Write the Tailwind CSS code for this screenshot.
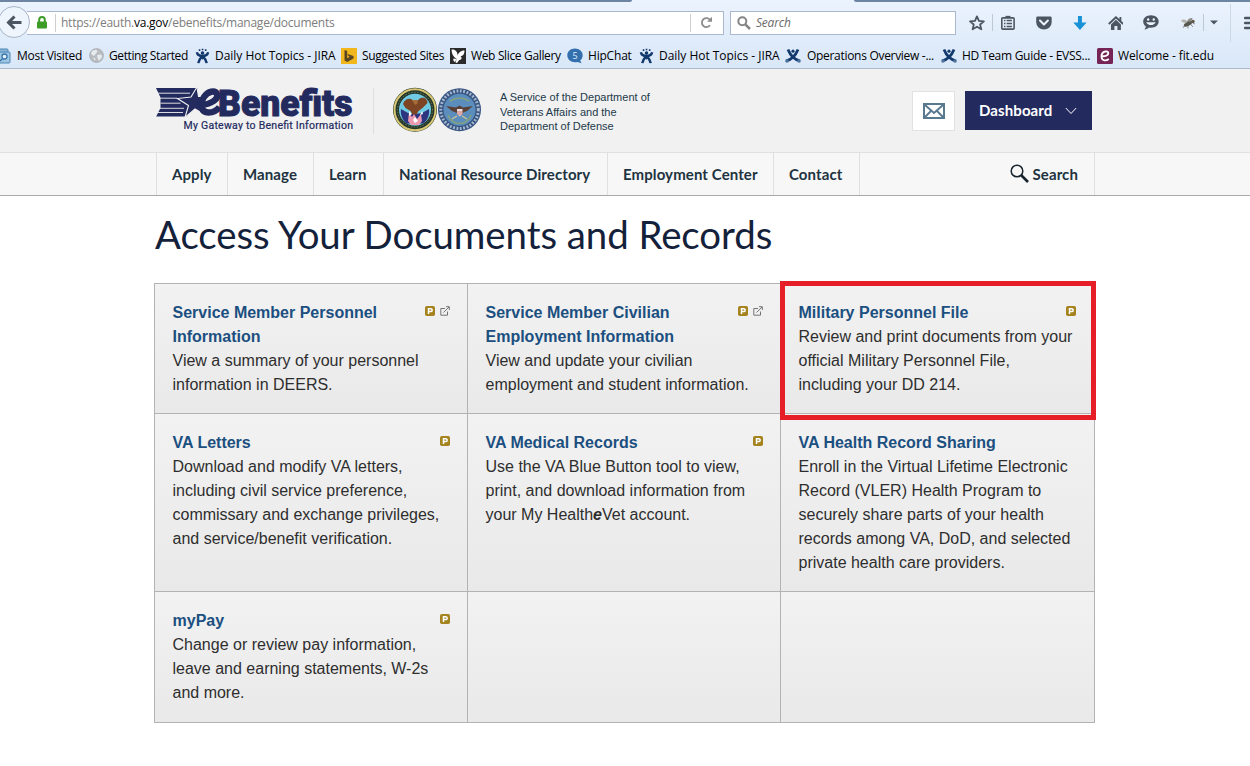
<!DOCTYPE html>
<html lang="en">
<head>
<meta charset="utf-8">
<title>eBenefits - Documents and Records</title>
<script src="https://cdn.jsdelivr.net/npm/@tailwindcss/browser@4"></script>
</head>
<body class="w-[1250px] h-[766px] overflow-hidden bg-white font-['Liberation_Sans',Arial,sans-serif]">
<svg class="hidden">
  <symbol id="jira" viewBox="0 0 16 16"><g fill="none" stroke="#12396b" stroke-width="2.600"><path d="M2 4c.5 2.500 3 4 6 4s5.500-1.500 6-4"/><path d="M3.500 15.500c.5-4 2-5 4.500-7.500c2.500 2.500 4 3.500 4.500 7.500"/></g><circle cx="8" cy="4.700" r="1.900" fill="#12396b"/><path d="M4 1.700h1.700M7.200 1h1.700M10.500 1.700h1.700" stroke="#12396b" stroke-width="1.700"/><path d="M4.500 7.500h7L8 12z" fill="#12396b"/></symbol>
  <symbol id="conf" viewBox="0 0 16 16"><g fill="none" stroke="#14396d" stroke-width="2.800"><path d="M3 1.500c2 5 6 10 12 11.500"/><path d="M13 1.500C11 6.500 7 11.500 1 13"/></g><circle cx="8" cy="3.200" r="1.600" fill="#14396d"/><circle cx="2" cy="13" r="1.800" fill="#4f759e"/><circle cx="14" cy="13" r="1.800" fill="#4f759e"/></symbol>
  <symbol id="prem" viewBox="0 0 10 10"><rect width="10" height="10" rx="1.800" fill="#a5841f"/><path d="M3.500 8V2.700h2.200a1.300 1.300 0 0 1 0 2.900H3.500" fill="none" stroke="#fff" stroke-width="1.500"/></symbol>
  <symbol id="ext" viewBox="0 0 10 10"><g fill="none" stroke="#757575" stroke-width="1"><path d="M5 2.500H.8v6.700h6.700V5.500M3.500 6.500L9 1M6 .7h3.300V4"/></g></symbol>
</svg>

<!-- Browser chrome -->
<div class="h-[69px] border-b border-[#adb9ca] bg-linear-to-b from-[#ebf3fd] to-[#d9e7f8] flex flex-col font-['Open_Sans','Noto_Sans',sans-serif] text-[12px] text-black">
  <div class="flex justify-between h-[2px] shrink-0">
    <div class="w-[632px] bg-[#6d84a3] rounded-br-[4px]"></div>
    <div class="w-[396px] bg-[#6d84a3] rounded-bl-[4px]"></div>
  </div>
  <div class="relative flex items-center h-[41px] shrink-0">
    <div class="absolute left-[-2px] top-[4px] size-[32px] rounded-full border border-[#a7b5c8] bg-[#eff5fc] flex items-center justify-center">
      <svg class="w-[16px] h-[15px]" viewBox="0 0 16 15" fill="none" stroke="#4c5663" stroke-width="3"><path d="M8.500 1.500l-6 6 6 6M3 7.500h12.500"/></svg>
    </div>
    <div class="ml-[27px] w-[697px] h-[24px] border border-[#a9b8cc] border-l-0 bg-white flex items-center">
      <svg class="ml-[9px] w-[12px] h-[13px]" viewBox="0 0 12 13"><rect x="1" y="5.500" width="10" height="7" rx="1" fill="#3d9b27"/><path d="M3.200 6V3.800a2.800 2.800 0 0 1 5.600 0V6" fill="none" stroke="#3d9b27" stroke-width="2"/></svg>
      <div class="ml-[7px] w-px h-[18px] bg-[#cfcfcf]"></div>
      <div class="ml-[5px] w-[629px] whitespace-nowrap text-[#7d7d7d] tracking-[-0.25px]">https://eauth.<span class="text-black">va.gov</span>/ebenefits/manage/documents</div>
      <div class="w-px h-[18px] bg-[#cfcfcf]"></div>
      <svg class="ml-[9px] w-[13px] h-[13px]" viewBox="0 0 13 13"><path d="M10 9.300a4.500 4.500 0 1 1 .3-5" fill="none" stroke="#8c8c8c" stroke-width="1.800"/><path d="M12 .8v5H7z" fill="#8c8c8c"/></svg>
    </div>
    <div class="ml-[6px] w-[226px] h-[24px] border border-[#a9b8cc] bg-white flex items-center">
      <svg class="ml-[6px] w-[14px] h-[14px]" viewBox="0 0 14 14" fill="none" stroke="#858585"><circle cx="5.300" cy="5.300" r="4" stroke-width="2"/><path d="M8.300 8.300l4.700 4.700" stroke-width="2.500"/></svg>
      <span class="ml-[5px] italic text-[#6a6a6a] tracking-[-0.2px]">Search</span>
    </div>
    <div class="flex items-center h-full w-[294px]">
      <svg class="ml-[13px] w-[16px] h-[16px]" viewBox="0 0 16 16" fill="none" stroke="#4c5663" stroke-width="1.800" stroke-linejoin="round"><path d="M8 1.300l2 4.600 5 .4-3.800 3.200 1.200 4.900L8 11.800l-4.400 2.600 1.200-4.900L1 6.300l5-.4z"/></svg>
      <div class="ml-[7px] w-px h-[17px] bg-[#bcc8d6]"></div>
      <svg class="ml-[8px] w-[14px] h-[15px]" viewBox="0 0 14 15"><rect x=".8" y="2.800" width="12.400" height="11.400" rx="1" fill="none" stroke="#4c5663" stroke-width="1.600"/><path d="M4.500 3V.8h5V3z" fill="#4c5663"/><path d="M3 5.500h1.500M3 8.500h1.500M3 11.500h1.500M5.700 5.500H11M5.700 8.500H11M5.700 11.500H11" stroke="#4c5663" stroke-width="1.500"/></svg>
      <svg class="ml-[21px] w-[16px] h-[14px]" viewBox="0 0 16 14"><path d="M1.500.5h13q1.300 0 1.300 1.500v4.200a7.800 7.400 0 0 1-15.600 0V2Q.2.5 1.500.5z" fill="#4c5663"/><path d="M4 4.500l4 4 4-4" fill="none" stroke="#edf4fc" stroke-width="2" stroke-linecap="round" stroke-linejoin="round"/></svg>
      <svg class="ml-[21px] w-[14px] h-[14px]" viewBox="0 0 14 14"><path d="M5 0h4v6.500h4.700L7 14 .3 6.500H5z" fill="#1991d6"/></svg>
      <svg class="ml-[21px] w-[16px] h-[14px]" viewBox="0 0 16 14"><path d="M.8 8L8 1.200 15.200 8M12.500 1v4" fill="none" stroke="#4c5663" stroke-width="1.900"/><path d="M3 8.500l5-4.700 5 4.700V14H9.500v-4h-3v4H3z" fill="#4c5663"/></svg>
      <svg class="ml-[20px] w-[16px] h-[15px]" viewBox="0 0 16 15"><path d="M8 .3c4.500 0 7.800 2.800 7.800 6.200S12.500 12.800 8 12.800c-.7 0-1.400 0-2-.2-1 1-2.500 1.800-4.500 1.900.9-.9 1.400-2 1.300-3.100C1.200 10.300.2 8.500.2 6.500.2 3.100 3.500.3 8 .3z" fill="#4c5663"/><circle cx="5.200" cy="4.500" r="1.200" fill="#edf4fc"/><circle cx="10.800" cy="4.500" r="1.200" fill="#edf4fc"/><path d="M3.200 7.200c1.500 3.800 8 3.800 9.600 0z" fill="#edf4fc"/></svg>
      <svg class="ml-[21px] w-[16px] h-[12px]" viewBox="0 0 16 12"><path d="M1 3.500C4 1 7 3 8.500 5.500 5.500 6.500 2 6 1 3.500z" fill="#b3b3ab"/><path d="M7 4.500c1-3 4-4 5.500-3.500C12.500 3.500 10 5.500 8 6z" fill="#8d9089"/><ellipse cx="8" cy="7" rx="4.500" ry="2" transform="rotate(-25 8 7)" fill="#55564e"/><circle cx="13" cy="4.500" r="1.800" fill="#63564a"/><path d="M5 8l-2 3M8 8v3.500M10.500 7l2.500 3M13 6l2 1" stroke="#66665d" stroke-width=".7"/></svg>
      <div class="ml-[7px] w-px h-[17px] bg-[#bcc8d6]"></div>
      <svg class="ml-[6px] w-[8px] h-[5px]" viewBox="0 0 8 5"><path d="M0 .5h8L4 4.500z" fill="#4c5663"/></svg>
      <div class="ml-[12px] w-px h-[38px] bg-[#cbd8e8]"></div>
      <svg class="ml-[13px] w-[6px] h-[14px]" viewBox="0 0 6 14"><path d="M1 2h6M1 7h6M1 12h6" stroke="#4c5663" stroke-width="2.400" stroke-linecap="round"/></svg>
    </div>
  </div>
  <!-- Bookmarks -->
  <div class="flex items-center h-[25px] whitespace-nowrap tracking-[-0.28px]">
    <svg class="w-[11px] h-[16px]" viewBox="0 0 11 16"><rect x="-5" y="1" width="13" height="12" rx="1" fill="#86b5d8" stroke="#4c86b5"/><rect x="-3" y="4" width="13" height="11" rx="1" fill="#9ec5e2" stroke="#4c86b5"/><circle cx="4.500" cy="8.500" r="2.500" fill="#e6f2fb" stroke="#3977ab" stroke-width="1.300"/><path d="M3 10.500L0 13" stroke="#3977ab" stroke-width="1.500"/></svg>
    <span class="ml-[6px] w-[72px]">Most Visited</span>
    <svg class="mr-[5px] w-[15px] h-[15px]" viewBox="0 0 15 15"><circle cx="7.500" cy="7.500" r="6.900" fill="#b9bdc2" stroke="#a5aaaf" stroke-width=".8"/><path d="M3 3l4-1.500 1.500 2L6.500 6 5 8 2 6zM8 7l4.500-.5L13 9l-3 4-1.500-3zM4 9.500l2.500 1L6 13z" fill="#e8ebee"/></svg>
    <span class="w-[86px] tracking-[-0.4px]">Getting Started</span>
    <svg class="w-[15px] h-[16px]"><use href="#jira"/></svg>
    <span class="ml-[5px] w-[126px] tracking-[-0.03px]">Daily Hot Topics - JIRA</span>
    <svg class="w-[16px] h-[16px]" viewBox="0 0 16 16"><rect width="16" height="16" fill="#f2b71d"/><path d="M3.500 2l2.700 1v7.300l2.500-1.500-1.300-.7-.9-2.200 6 2v2.700l-6.300 3.500-2.700-1.600z" fill="#5b4622"/></svg>
    <span class="ml-[5px] w-[88px] tracking-[-0.35px]">Suggested Sites</span>
    <svg class="w-[16px] h-[16px]" viewBox="0 0 16 16"><rect width="16" height="16" fill="#2b2b2b"/><path d="M1.500 1.500C5 .8 7.500 3.500 7.700 7.500 8.500 4 11.500 2.500 14.500 2.500c.2 3.500-1.700 5.500-4 6 2 1 1 3.500-1.300 3.500L7 15l-1.500-.5L6.700 11C3.500 9 1.500 6 1.500 1.500zM3.500 10.500l3 .5-1.500 3C3.500 13.500 3 12 3.500 10.500z" fill="#fff"/></svg>
    <span class="ml-[5px] w-[96px] tracking-[-0.35px]">Web Slice Gallery</span>
    <svg class="w-[16px] h-[16px]" viewBox="0 0 16 16"><path d="M8 .5c4.500 0 7.700 3 7.700 6.700 0 2.300-1 4-2.500 5.200l1.300 2.900-4-1.300c-.8.200-1.600.2-2.500.2C3.500 14.200.3 11 .3 7.200S3.500.5 8 .5z" fill="#3370ad"/><text x="8" y="10.500" font-size="9" text-anchor="middle" fill="#dcebf9">5</text></svg>
    <span class="ml-[5px] w-[51px] tracking-[-0.2px]">HipChat</span>
    <svg class="w-[15px] h-[16px]"><use href="#jira"/></svg>
    <span class="ml-[5px] w-[126px] tracking-[-0.03px]">Daily Hot Topics - JIRA</span>
    <svg class="w-[16px] h-[16px]"><use href="#conf"/></svg>
    <span class="ml-[6px] w-[134px] tracking-[-0.3px]">Operations Overview -...</span>
    <svg class="w-[16px] h-[16px]"><use href="#conf"/></svg>
    <span class="ml-[5px] w-[135px]">HD Team Guide - EVSS...</span>
    <svg class="w-[16px] h-[16px]" viewBox="0 0 16 16"><rect width="16" height="16" rx="1.500" fill="#752455"/><path d="M4.500 8.200C9 8.500 11.500 7 11.300 5c-.2-1.300-1.500-1.800-3-1.500-2.300.5-4 2.800-3.800 5.500.3 3.500 4 4.500 7.300 2" fill="none" stroke="#fff" stroke-width="1.800"/></svg>
    <span class="ml-[5px] tracking-[-0.1px]">Welcome - fit.edu</span>
  </div>
</div>

<!-- Site header -->
<header class="h-[83px] bg-[#f1f1f1] pl-[155px] flex">
  <svg class="mt-[17px] w-[200px] h-[48px] shrink-0 overflow-visible" viewBox="0 0 200 48">
    <g fill="#232a5e">
      <path d="M1 2h42L32 30.500H1.200L5.500 22V11.500z"/>
      <path d="M3 7.200h32M5 12.200h17M5.500 17.200h20M5 22.300h24M3 26.500h25" stroke="#f1f1f1" stroke-width=".9"/>
      <path d="M42 1l1.500 9.500H52L45 18l2 9-7-4-10 8.500 3.500-12L22.500 12.500 36 11z" stroke="#f1f1f1" stroke-width="1.100"/>
      <path d="M45 19C57 18.500 64 12.500 62 8c-2-4-9-3-13 3-4.500 7-3 15.500 4.500 15.500 5 0 8.500-2 11-5.500" fill="none" stroke="#232a5e" stroke-width="6.400"/>
      <text x="63" y="30" font-family="Roboto" font-weight="900" font-size="37" textLength="134.500" lengthAdjust="spacingAndGlyphs" stroke="#232a5e" stroke-width="1">Benefits</text>
      <text x="28.500" y="43" font-family="Roboto" font-weight="400" font-size="10.500" textLength="169.500" stroke="#232a5e" stroke-width=".2">My Gateway to Benefit Information</text>
    </g>
  </svg>
  <div class="ml-[18px] mt-[19px] w-px h-[46px] bg-[#dedede]"></div>
  <svg class="ml-[18px] mt-[18px] w-[91px] h-[46px] shrink-0" viewBox="0 0 91 46">
    <circle cx="23" cy="22.700" r="22" fill="#26372e"/><circle cx="23" cy="22.700" r="20.500" fill="none" stroke="#d9c872" stroke-width="2"/>
    <circle cx="23" cy="22.700" r="17.500" fill="none" stroke="#6e8050" stroke-width="1" stroke-dasharray="1.500 1.500"/>
    <circle cx="23" cy="22.700" r="16" fill="#6fcbe4"/>
    <path d="M9 22l7 4 7 1 7-1 7-4c1 6-2 12-6 14.500H15C11 34 8 28 9 22z" fill="#2d3580"/>
    <path d="M17 26l3 4 2-3 3 5 4-5 1 7-3 4h-8l-3-4z" fill="#ec9ab0"/><path d="M17 24l3 3-3 2zM30 24l-2 4 3-1zM21 33l2-3 3 4-3 2z" fill="#fff"/>
    <path d="M11 17c1-4 5-6 8-5l4.500 3 5-4c4-1 7 1 7 5l-5 5-4 3-2 3.500h-4l-2-3.500-5-3z" fill="#7d4523"/><path d="M20 13h5l1 3-3 2z" fill="#a66d36"/>
    <circle cx="67.500" cy="22.700" r="21.500" fill="#375482"/><circle cx="67.500" cy="22.700" r="18.800" fill="none" stroke="#a7b9ce" stroke-width="3" stroke-dasharray="1.800 1.600"/>
    <circle cx="67.500" cy="22.700" r="16" fill="#5b8ebd"/><path d="M56 28a12 12 0 0 0 23 0M58 14q9.500-6 19 0" fill="none" stroke="#86a17c" stroke-width="1.500"/>
    <path d="M54 19l10 1.500 3.500-2 3.500 2L81 19l-6 5-5 2h-5l-5-2z" fill="#5a4138"/><path d="M65 22h5.500v5l-2.700 2.500L65 27z" fill="#e8dfe0"/><path d="M66 24v4M68 24v4.500M70 24v4" stroke="#c85250" stroke-width=".8"/><path d="M65 29l-5 3M70 29l5 3" stroke="#d5c58b" stroke-width="1.300"/>
  </svg>
  <p class="ml-[17px] mt-[21px] w-[180px] text-[11px] leading-[14.500px] text-[#22394a] whitespace-nowrap">A Service of the Department of<br>Veterans Affairs and the<br>Department of Defense</p>
  <div class="ml-[232px] mt-[22px] w-[43px] h-[40px] border border-[#e2e2e2] bg-white flex items-center justify-center">
    <svg class="w-[22px] h-[16px]" viewBox="0 0 22 16" fill="none" stroke="#597991"><rect x="1" y="1" width="20" height="14" stroke-width="2"/><path d="M2 2l9 8 9-8M2 14l6-6M20 14l-6-6" stroke-width="1.900"/></svg>
  </div>
  <div class="ml-[10px] mt-[22px] w-[127px] h-[39px] bg-[#232a5e] text-white flex items-center pl-[14px] font-['Lato',sans-serif] font-bold text-[15px] tracking-[0.1px]">
    <span class="w-[86px]">Dashboard</span>
    <svg class="w-[12px] h-[8px]" viewBox="0 0 12 8" fill="none" stroke="#fff" stroke-width="1"><path d="M.8 1L6 6.500 11.200 1"/></svg>
  </div>
</header>

<nav class="h-[44px] border-t border-[#e0e0e0] border-b border-b-[#a9a9a9] bg-[#f7f7f7] pl-[156px] font-['Lato',sans-serif] font-bold text-[15px] tracking-[0.1px] text-[#21333f]">
  <div class="flex h-full w-[939px] border-x border-[#e0e0e0]">
    <a class="w-[71px] border-r border-[#e0e0e0] pl-[15px] flex items-center">Apply</a>
    <a class="w-[86px] border-r border-[#e0e0e0] pl-[15px] flex items-center">Manage</a>
    <a class="w-[70px] border-r border-[#e0e0e0] pl-[15px] flex items-center">Learn</a>
    <a class="w-[224px] border-r border-[#e0e0e0] pl-[15px] flex items-center whitespace-nowrap">National Resource Directory</a>
    <a class="w-[166px] border-r border-[#e0e0e0] pl-[15px] flex items-center whitespace-nowrap">Employment Center</a>
    <a class="w-[86px] border-r border-[#e0e0e0] pl-[15px] flex items-center">Contact</a>
    <a class="ml-auto pr-[16px] flex items-center gap-[4px]"><svg class="w-[19px] h-[19px] mb-[2px]" viewBox="0 0 19 19" fill="none" stroke="#18242e"><circle cx="7" cy="7" r="5.800" stroke-width="1.500"/><path d="M11 11l7 7" stroke-width="2.600"/></svg>Search</a>
  </div>
</nav>

<main class="relative pl-[154px]">
  <h1 class="h-[87px] pt-[13px] pl-px font-['Lato',sans-serif] text-[38.400px] leading-[50px] tracking-[-0.05px] text-[#14213a] whitespace-nowrap">Access Your Documents and Records</h1>
  <div class="grid grid-cols-[313px_313px_314px] grid-rows-[130px_178px_131px] w-[941px] h-[440px] border-l border-t border-[#b3b3b3] text-[16px] leading-[24px] text-[#2e2e2e] whitespace-nowrap">
    <section class="border-r border-b border-[#b3b3b3] bg-linear-to-b from-[#f2f2f2] to-[#e9e9e9] pl-[17.500px] pr-[17px] pt-[17px] flex items-start justify-between">
      <div class="w-[240px]"><h2 class="font-bold text-[#1b4f80]">Service Member Personnel<br>Information</h2><p>View a summary of your personnel<br>information in DEERS.</p></div>
      <div class="flex gap-[5px] mt-[5px]"><svg class="size-[10px]"><use href="#prem"/></svg><svg class="size-[10px]"><use href="#ext"/></svg></div>
    </section>
    <section class="border-r border-b border-[#b3b3b3] bg-linear-to-b from-[#f2f2f2] to-[#e9e9e9] pl-[17.500px] pr-[17px] pt-[17px] flex items-start justify-between">
      <div class="w-[240px]"><h2 class="font-bold text-[#1b4f80]">Service Member Civilian<br>Employment Information</h2><p>View and update your civilian<br>employment and student information.</p></div>
      <div class="flex gap-[5px] mt-[5px]"><svg class="size-[10px]"><use href="#prem"/></svg><svg class="size-[10px]"><use href="#ext"/></svg></div>
    </section>
    <section class="border-r border-b border-[#b3b3b3] bg-linear-to-b from-[#f2f2f2] to-[#e9e9e9] pl-[17.500px] pr-[18px] pt-[17px] flex items-start justify-between">
      <div class="w-[240px]"><h2 class="font-bold text-[#1b4f80]">Military Personnel File</h2><p>Review and print documents from your<br>official Military Personnel File,<br>including your DD 214.</p></div>
      <svg class="size-[10px] mt-[5px]"><use href="#prem"/></svg>
    </section>
    <section class="border-r border-b border-[#b3b3b3] bg-linear-to-b from-[#f2f2f2] to-[#e9e9e9] pl-[17.500px] pr-[17px] pt-[17px] flex items-start justify-between">
      <div class="w-[240px]"><h2 class="font-bold text-[#1b4f80]">VA Letters</h2><p>Download and modify VA letters,<br>including civil service preference,<br>commissary and exchange privileges,<br>and service/benefit verification.</p></div>
      <svg class="size-[10px] mt-[5px]"><use href="#prem"/></svg>
    </section>
    <section class="border-r border-b border-[#b3b3b3] bg-linear-to-b from-[#f2f2f2] to-[#e9e9e9] pl-[17.500px] pr-[17px] pt-[17px] flex items-start justify-between">
      <div class="w-[240px]"><h2 class="font-bold text-[#1b4f80]">VA Medical Records</h2><p>Use the VA Blue Button tool to view,<br>print, and download information from<br>your My Health<b><i>e</i></b>Vet account.</p></div>
      <svg class="size-[10px] mt-[5px]"><use href="#prem"/></svg>
    </section>
    <section class="border-r border-b border-[#b3b3b3] bg-linear-to-b from-[#f2f2f2] to-[#e9e9e9] pl-[17.500px] pt-[17px]">
      <h2 class="font-bold text-[#1b4f80]">VA Health Record Sharing</h2><p>Enroll in the Virtual Lifetime Electronic<br>Record (VLER) Health Program to<br>securely share parts of your health<br>records among VA, DoD, and selected<br>private health care providers.</p>
    </section>
    <section class="border-r border-b border-[#b3b3b3] bg-linear-to-b from-[#f2f2f2] to-[#e9e9e9] pl-[17.500px] pr-[17px] pt-[17px] flex items-start justify-between">
      <div class="w-[240px]"><h2 class="font-bold text-[#1b4f80]">myPay</h2><p>Change or review pay information,<br>leave and earning statements, W-2s<br>and more.</p></div>
      <svg class="size-[10px] mt-[5px]"><use href="#prem"/></svg>
    </section>
    <section class="border-r border-b border-[#b3b3b3] bg-linear-to-b from-[#f2f2f2] to-[#e9e9e9]"></section>
    <section class="border-r border-b border-[#b3b3b3] bg-linear-to-b from-[#f2f2f2] to-[#e9e9e9]"></section>
  </div>
  <div class="absolute left-[780px] top-[85px] w-[316px] h-[139px] border-[5px] border-[#e61e28]"></div>
</main>
</body>
</html>
